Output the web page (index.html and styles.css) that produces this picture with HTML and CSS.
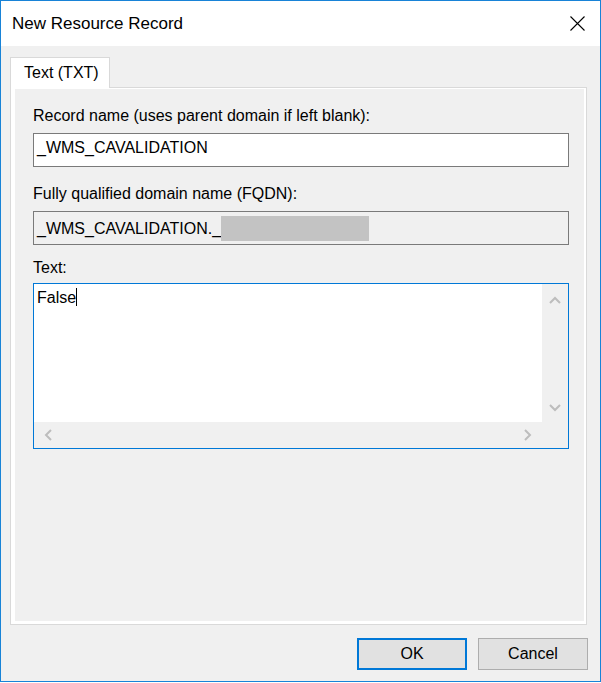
FILE: index.html
```html
<!DOCTYPE html>
<html lang="en">
<head>
  <meta charset="UTF-8">
  <title>New Resource Record</title>
  <link rel="stylesheet" href="styles.css">
</head>
<body>
  <div class="window">
    <div class="titlebar">
      <span class="title">New Resource Record</span>
      <svg class="close" width="15" height="15" viewBox="0 0 15 15">
        <path d="M0.5 0.5 L14.5 14.5 M14.5 0.5 L0.5 14.5" stroke="#000" stroke-width="1.1" fill="none"/>
      </svg>
    </div>

    <div class="client">
      <div class="tab">Text (TXT)</div>
      <div class="panel">
        <div class="page">
          <label class="label first">Record name (uses parent domain if left blank):</label>
          <div class="field">_WMS_CAVALIDATION</div>

          <label class="label second">Fully qualified domain name (FQDN):</label>
          <div class="field readonly">_WMS_CAVALIDATION._<span class="redacted"></span></div>

          <label class="label third">Text:</label>
          <div class="memo">
            <div class="memo-text">False<span class="caret"></span></div>
            <div class="vbar">
              <svg width="12" height="8" viewBox="0 0 12 8"><polyline points="1,7 6,2 11,7" fill="none" stroke="#bdbdbd" stroke-width="2"/></svg>
              <svg width="12" height="8" viewBox="0 0 12 8"><polyline points="1,1 6,6 11,1" fill="none" stroke="#bdbdbd" stroke-width="2"/></svg>
            </div>
            <div class="hbar">
              <svg width="8" height="12" viewBox="0 0 8 12"><polyline points="7,1 2,6 7,11" fill="none" stroke="#bdbdbd" stroke-width="2"/></svg>
              <svg width="8" height="12" viewBox="0 0 8 12"><polyline points="1,1 6,6 1,11" fill="none" stroke="#bdbdbd" stroke-width="2"/></svg>
            </div>
            <div class="corner"></div>
          </div>
        </div>
      </div>

      <div class="buttons">
        <button class="btn default">OK</button>
        <button class="btn">Cancel</button>
      </div>
    </div>
  </div>
</body>
</html>
```

FILE: styles.css
```css
html, body {
  margin: 0;
  padding: 0;
  background: #ffffff;
}

.window {
  width: 601px;
  height: 682px;
  box-sizing: border-box;
  border: 1px solid #1883d7;
  background: #f0f0f0;
  display: flex;
  flex-direction: column;
  font-family: 'Liberation Sans', Arial, sans-serif;
  font-size: 16px;
  color: #000;
}

.titlebar {
  height: 45px;
  background: #ffffff;
  display: flex;
  align-items: center;
  padding-left: 11px;
}

.title {
  font-size: 17px;
  line-height: 20px;
  padding-top: 1px;
}

.close {
  margin-left: auto;
  margin-right: 15px;
}

.client {
  flex: 1;
  display: flex;
  flex-direction: column;
  padding: 11px 12px 0 9px;
}

.tab {
  align-self: flex-start;
  position: relative;
  width: 100px;
  height: 31px;
  box-sizing: border-box;
  margin-bottom: -1px;
  padding: 5px 0 0 13px;
  line-height: 20px;
  background: #ffffff;
  border: 1px solid #d9d9d9;
  border-bottom: none;
}

.panel {
  height: 538px;
  box-sizing: border-box;
  margin-right: 1px;
  border: 1px solid #d9d9d9;
  background: #ffffff;
  padding: 1px 2px 3px 4px;
  display: flex;
}

.page {
  flex: 1;
  background: #f0f0f0;
  padding: 17px 0 0 18px;
  display: flex;
  flex-direction: column;
  align-items: flex-start;
}

.label {
  display: block;
  line-height: 20px;
  margin-bottom: 7px;
}

.label.second { margin-top: 17px; }
.label.third { margin-top: 13px; margin-bottom: 5px; }

.field {
  width: 536px;
  height: 34px;
  box-sizing: border-box;
  border: 1px solid #7a7a7a;
  background: #ffffff;
  padding: 4px 0 0 3px;
  line-height: 20px;
  white-space: nowrap;
  overflow: hidden;
}

.field.readonly {
  background: #f0f0f0;
}

.redacted {
  display: inline-block;
  width: 148px;
  height: 25px;
  background: #c3c3c3;
  vertical-align: -7px;
}

.memo {
  width: 536px;
  height: 166px;
  box-sizing: border-box;
  border: 1px solid #0078d7;
  display: grid;
  grid-template-columns: 1fr 26px;
  grid-template-rows: 1fr 26px;
}

.memo-text {
  background: #ffffff;
  padding: 4px 0 0 3px;
  line-height: 20px;
}

.caret {
  display: inline-block;
  width: 1px;
  height: 18px;
  background: #000;
  vertical-align: -3px;
}

.vbar {
  background: #f0f0f0;
  display: flex;
  flex-direction: column;
  justify-content: space-between;
  align-items: center;
  padding: 12px 0 10px;
}

.hbar {
  background: #f0f0f0;
  display: flex;
  justify-content: space-between;
  align-items: center;
  padding: 0 10px;
}

.corner {
  background: #f0f0f0;
}

.buttons {
  display: flex;
  justify-content: flex-end;
  gap: 11px;
  margin-top: 13px;
}

.btn {
  width: 110px;
  height: 32px;
  box-sizing: border-box;
  background: #e1e1e1;
  border: 1px solid #adadad;
  font-family: inherit;
  font-size: 16px;
  color: #000;
  padding: 0;
}

.btn.default {
  border: 2px solid #0078d7;
}
```
